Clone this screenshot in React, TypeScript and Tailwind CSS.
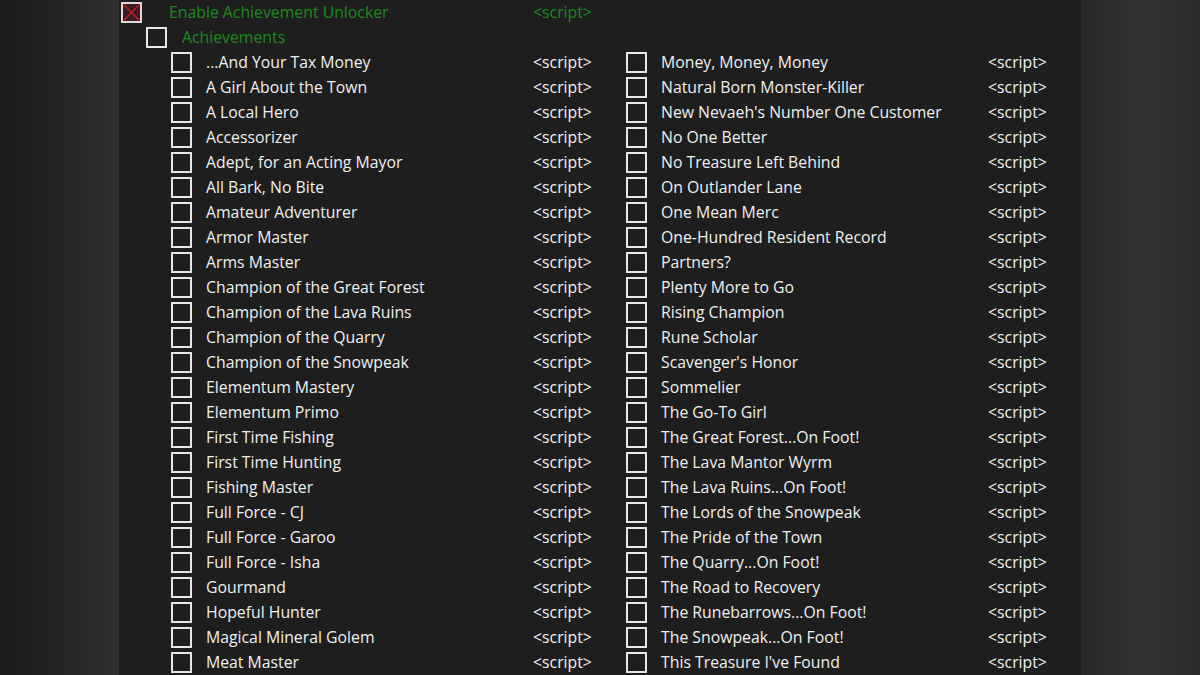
import React from 'react';

const left = [
  '...And Your Tax Money',
  'A Girl About the Town',
  'A Local Hero',
  'Accessorizer',
  'Adept, for an Acting Mayor',
  'All Bark, No Bite',
  'Amateur Adventurer',
  'Armor Master',
  'Arms Master',
  'Champion of the Great Forest',
  'Champion of the Lava Ruins',
  'Champion of the Quarry',
  'Champion of the Snowpeak',
  'Elementum Mastery',
  'Elementum Primo',
  'First Time Fishing',
  'First Time Hunting',
  'Fishing Master',
  'Full Force - CJ',
  'Full Force - Garoo',
  'Full Force - Isha',
  'Gourmand',
  'Hopeful Hunter',
  'Magical Mineral Golem',
  'Meat Master',
];

const right = [
  'Money, Money, Money',
  'Natural Born Monster-Killer',
  "New Nevaeh's Number One Customer",
  'No One Better',
  'No Treasure Left Behind',
  'On Outlander Lane',
  'One Mean Merc',
  'One-Hundred Resident Record',
  'Partners?',
  'Plenty More to Go',
  'Rising Champion',
  'Rune Scholar',
  "Scavenger's Honor",
  'Sommelier',
  'The Go-To Girl',
  'The Great Forest...On Foot!',
  'The Lava Mantor Wyrm',
  'The Lava Ruins...On Foot!',
  'The Lords of the Snowpeak',
  'The Pride of the Town',
  'The Quarry...On Foot!',
  'The Road to Recovery',
  'The Runebarrows...On Foot!',
  'The Snowpeak...On Foot!',
  "This Treasure I've Found",
];

function Box({ checked = false }: { checked?: boolean }) {
  return (
    <div
      className={
        'w-[21px] h-[21px] shrink-0 border-2 ' +
        (checked ? 'border-[#e6d6d8] bg-[#3a1c20]' : 'border-[#e8e8e8] bg-[#1e1e1e]')
      }
    >
      {checked && (
        <svg viewBox="0 0 17 17" className="w-full h-full">
          <path d="M1 1L16 16M16 1L1 16" stroke="#d0202a" strokeWidth="1.2" />
        </svg>
      )}
    </div>
  );
}

function Column({ items }: { items: string[] }) {
  return (
    <div className="flex flex-col">
      {items.map((name) => (
        <div key={name} className="h-[25px] flex items-center">
          <Box />
          <span className="ml-[14px] w-[327px] whitespace-nowrap">{name}</span>
          <span className="w-[93px]">&lt;script&gt;</span>
        </div>
      ))}
    </div>
  );
}

export default function App() {
  return (
    <div
      className="w-[1200px] h-[675px] overflow-hidden flex text-[15.8px] leading-none text-[#f0f0f0]"
      style={{ fontFamily: '"Open Sans", "Noto Sans", sans-serif' }}
    >
      <div className="w-[119px] bg-gradient-to-r from-[#1b1b1b] via-[#242424] to-[#2f2f2f]" />
      <div className="w-[962px] bg-[#1e1e1e] pl-[2px]">
        <div className="h-[25px] flex items-center text-[#1e8a1e]">
          <Box checked />
          <span className="ml-[27px] w-[364px]">Enable Achievement Unlocker</span>
          <span>&lt;script&gt;</span>
        </div>
        <div className="h-[25px] flex items-center pl-[25px] text-[#1e8a1e]">
          <Box />
          <span className="ml-[15px]">Achievements</span>
        </div>
        <div className="flex pl-[50px]">
          <Column items={left} />
          <Column items={right} />
        </div>
      </div>
      <div className="flex-1 bg-gradient-to-r from-[#262626] via-[#333333] to-[#2b2b2b]" />
    </div>
  );
}
